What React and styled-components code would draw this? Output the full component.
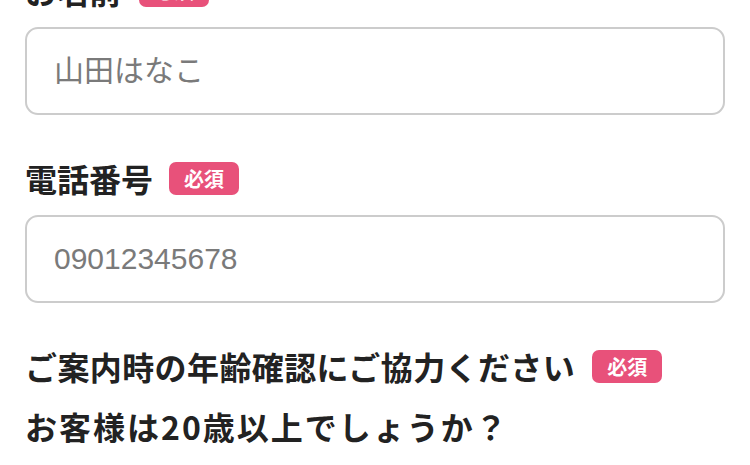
import styled, { createGlobalStyle } from "styled-components";

const GlobalStyle = createGlobalStyle`
  html, body {
    margin: 0;
    padding: 0;
    background: #fff;
  }
  body {
    font-family: "Liberation Sans", "Noto Sans CJK JP", sans-serif;
    color: #222;
    overflow: hidden;
  }
`;

const Form = styled.form`
  margin-top: -26px;
  padding: 0 25px;
  display: flex;
  flex-direction: column;
`;

const Field = styled.div`
  display: flex;
  flex-direction: column;
  gap: 20px;
  & + & {
    margin-top: 47px;
  }
`;

const LabelRow = styled.div`
  display: flex;
  align-items: center;
  gap: ${({ $gap }) => $gap || 16}px;
  height: 33px;
`;

const Label = styled.label`
  font-family: "Noto Sans CJK JP", sans-serif;
  font-size: 32px;
  font-weight: 700;
  line-height: 33px;
  color: #222;
  white-space: nowrap;
  letter-spacing: ${({ $spacing }) => $spacing || 0}px;
`;

const Badge = styled.span`
  display: inline-flex;
  align-items: center;
  justify-content: center;
  height: 33px;
  padding: 0 15px;
  border-radius: 7px;
  background: #e8517a;
  color: #fff;
  font-family: "Noto Sans CJK JP", sans-serif;
  font-size: 20px;
  font-weight: 700;
  line-height: 1;
`;

const Input = styled.input`
  box-sizing: border-box;
  width: 100%;
  height: 88px;
  padding: 0 27px;
  border: 2px solid #cccccc;
  border-radius: 13px;
  background: #fff;
  font-family: "Liberation Sans", "Noto Sans CJK JP", sans-serif;
  font-size: 30px;
  color: #222;
  outline: none;
  &::placeholder {
    color: #7a7a7a;
  }
`;

const Question = styled.p`
  margin: 27px 0 0;
  font-family: "Noto Sans CJK JP", sans-serif;
  font-size: 32px;
  font-weight: 700;
  line-height: 33px;
  letter-spacing: 2px;
  color: #222;
`;

function RequiredLabel({ children, gap, spacing }) {
  return (
    <LabelRow $gap={gap}>
      <Label $spacing={spacing}>{children}</Label>
      <Badge>必須</Badge>
    </LabelRow>
  );
}

export default function App() {
  return (
    <>
      <GlobalStyle />
      <Form onSubmit={(e) => e.preventDefault()}>
        <Field>
          <RequiredLabel gap={18}>お名前</RequiredLabel>
          <Input type="text" placeholder="山田はなこ" />
        </Field>
        <Field>
          <RequiredLabel>電話番号</RequiredLabel>
          <Input type="tel" placeholder="09012345678" />
        </Field>
        <Field>
          <RequiredLabel gap={17} spacing={0.4}>ご案内時の年齢確認にご協力ください</RequiredLabel>
        </Field>
        <Question>お客様は20歳以上でしょうか？</Question>
      </Form>
    </>
  );
}
